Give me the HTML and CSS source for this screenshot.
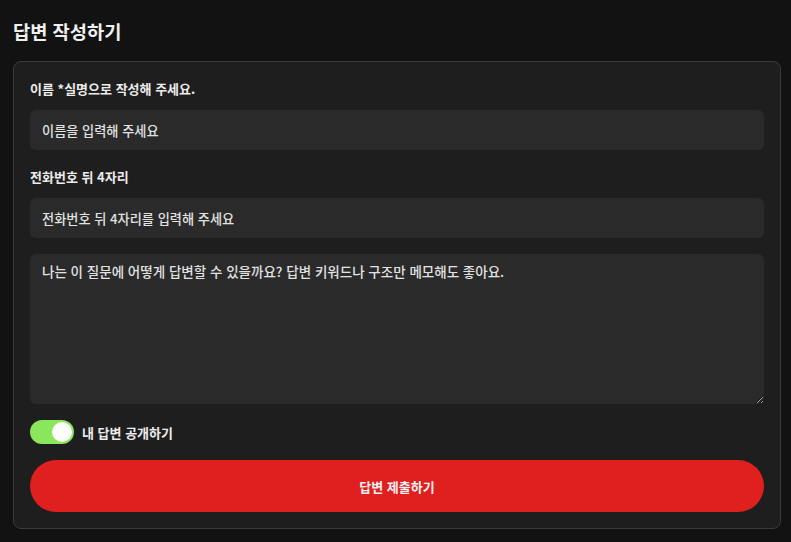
FILE: index.html
```html
<!DOCTYPE html>
<html lang="ko">
<head>
<meta charset="utf-8">
<link rel="stylesheet" href="styles.css">
</head>
<body>
<div class="page">
  <h1 class="title">답변 작성하기</h1>
  <form class="card">
    <div class="field">
      <label class="label">이름 *실명으로 작성해 주세요.</label>
      <input class="input" type="text" placeholder="이름을 입력해 주세요">
    </div>
    <div class="field">
      <label class="label">전화번호 뒤 4자리</label>
      <input class="input" type="text" placeholder="전화번호 뒤 4자리를 입력해 주세요">
    </div>
    <textarea class="textarea" placeholder="나는 이 질문에 어떻게 답변할 수 있을까요? 답변 키워드나 구조만 메모해도 좋아요."></textarea>
    <div class="toggle-row">
      <span class="toggle"><span class="knob"></span></span>
      <span class="toggle-label">내 답변 공개하기</span>
    </div>
    <button class="submit" type="button">답변 제출하기</button>
  </form>
</div>
</body>
</html>
```
FILE: styles.css
```css
* { box-sizing: border-box; }
html, body { margin: 0; padding: 0; background: #121212; }
body {
  font-family: "Noto Sans CJK KR", "Noto Sans", sans-serif;
  color: #e8e8e8;
}
.page {
  width: 768px;
  margin-left: 13px;
  padding-top: 16px;
}
.title {
  margin: 0 0 15px 0;
  font-size: 18.7px;
  line-height: 30px;
  font-weight: 700;
  color: #f0f0f0;
}
.card {
  background: #1e1e1e;
  border: 1px solid #3a3a3a;
  border-radius: 8px;
  padding: 16px;
  display: flex;
  flex-direction: column;
  gap: 16px;
}
.field { display: flex; flex-direction: column; gap: 10px; }
.label {
  font-size: 13px;
  line-height: 22px;
  font-weight: 700;
  color: #ececec;
}
.input, .textarea {
  display: block;
  width: 100%;
  background: #2a2a2a;
  border: none;
  border-radius: 6px;
  color: #e8e8e8;
  font-family: inherit;
  font-weight: 500;
  outline: none;
}
.input { height: 40px; padding: 0 12px; font-size: 13.2px; }
.textarea {
  height: 150px;
  padding: 7px 12px;
  font-size: 13.5px;
  line-height: 20px;
  resize: vertical;
}
.input::placeholder, .textarea::placeholder { color: #e2e2e2; opacity: 1; }
.toggle-row { display: flex; align-items: center; gap: 8px; }
.toggle {
  width: 44px;
  height: 24px;
  border-radius: 12px;
  background: #8ae65a;
  display: flex;
  align-items: center;
  justify-content: flex-end;
  padding: 2px;
}
.knob {
  width: 20px;
  height: 20px;
  border-radius: 50%;
  background: #ffffff;
}
.toggle-label {
  font-size: 13px;
  font-weight: 700;
  color: #ececec;
}
.submit {
  height: 52px;
  border: none;
  border-radius: 26px;
  background: #e01f1f;
  color: #f2f2f2;
  font-family: inherit;
  font-size: 13px;
  font-weight: 700;
}
```
